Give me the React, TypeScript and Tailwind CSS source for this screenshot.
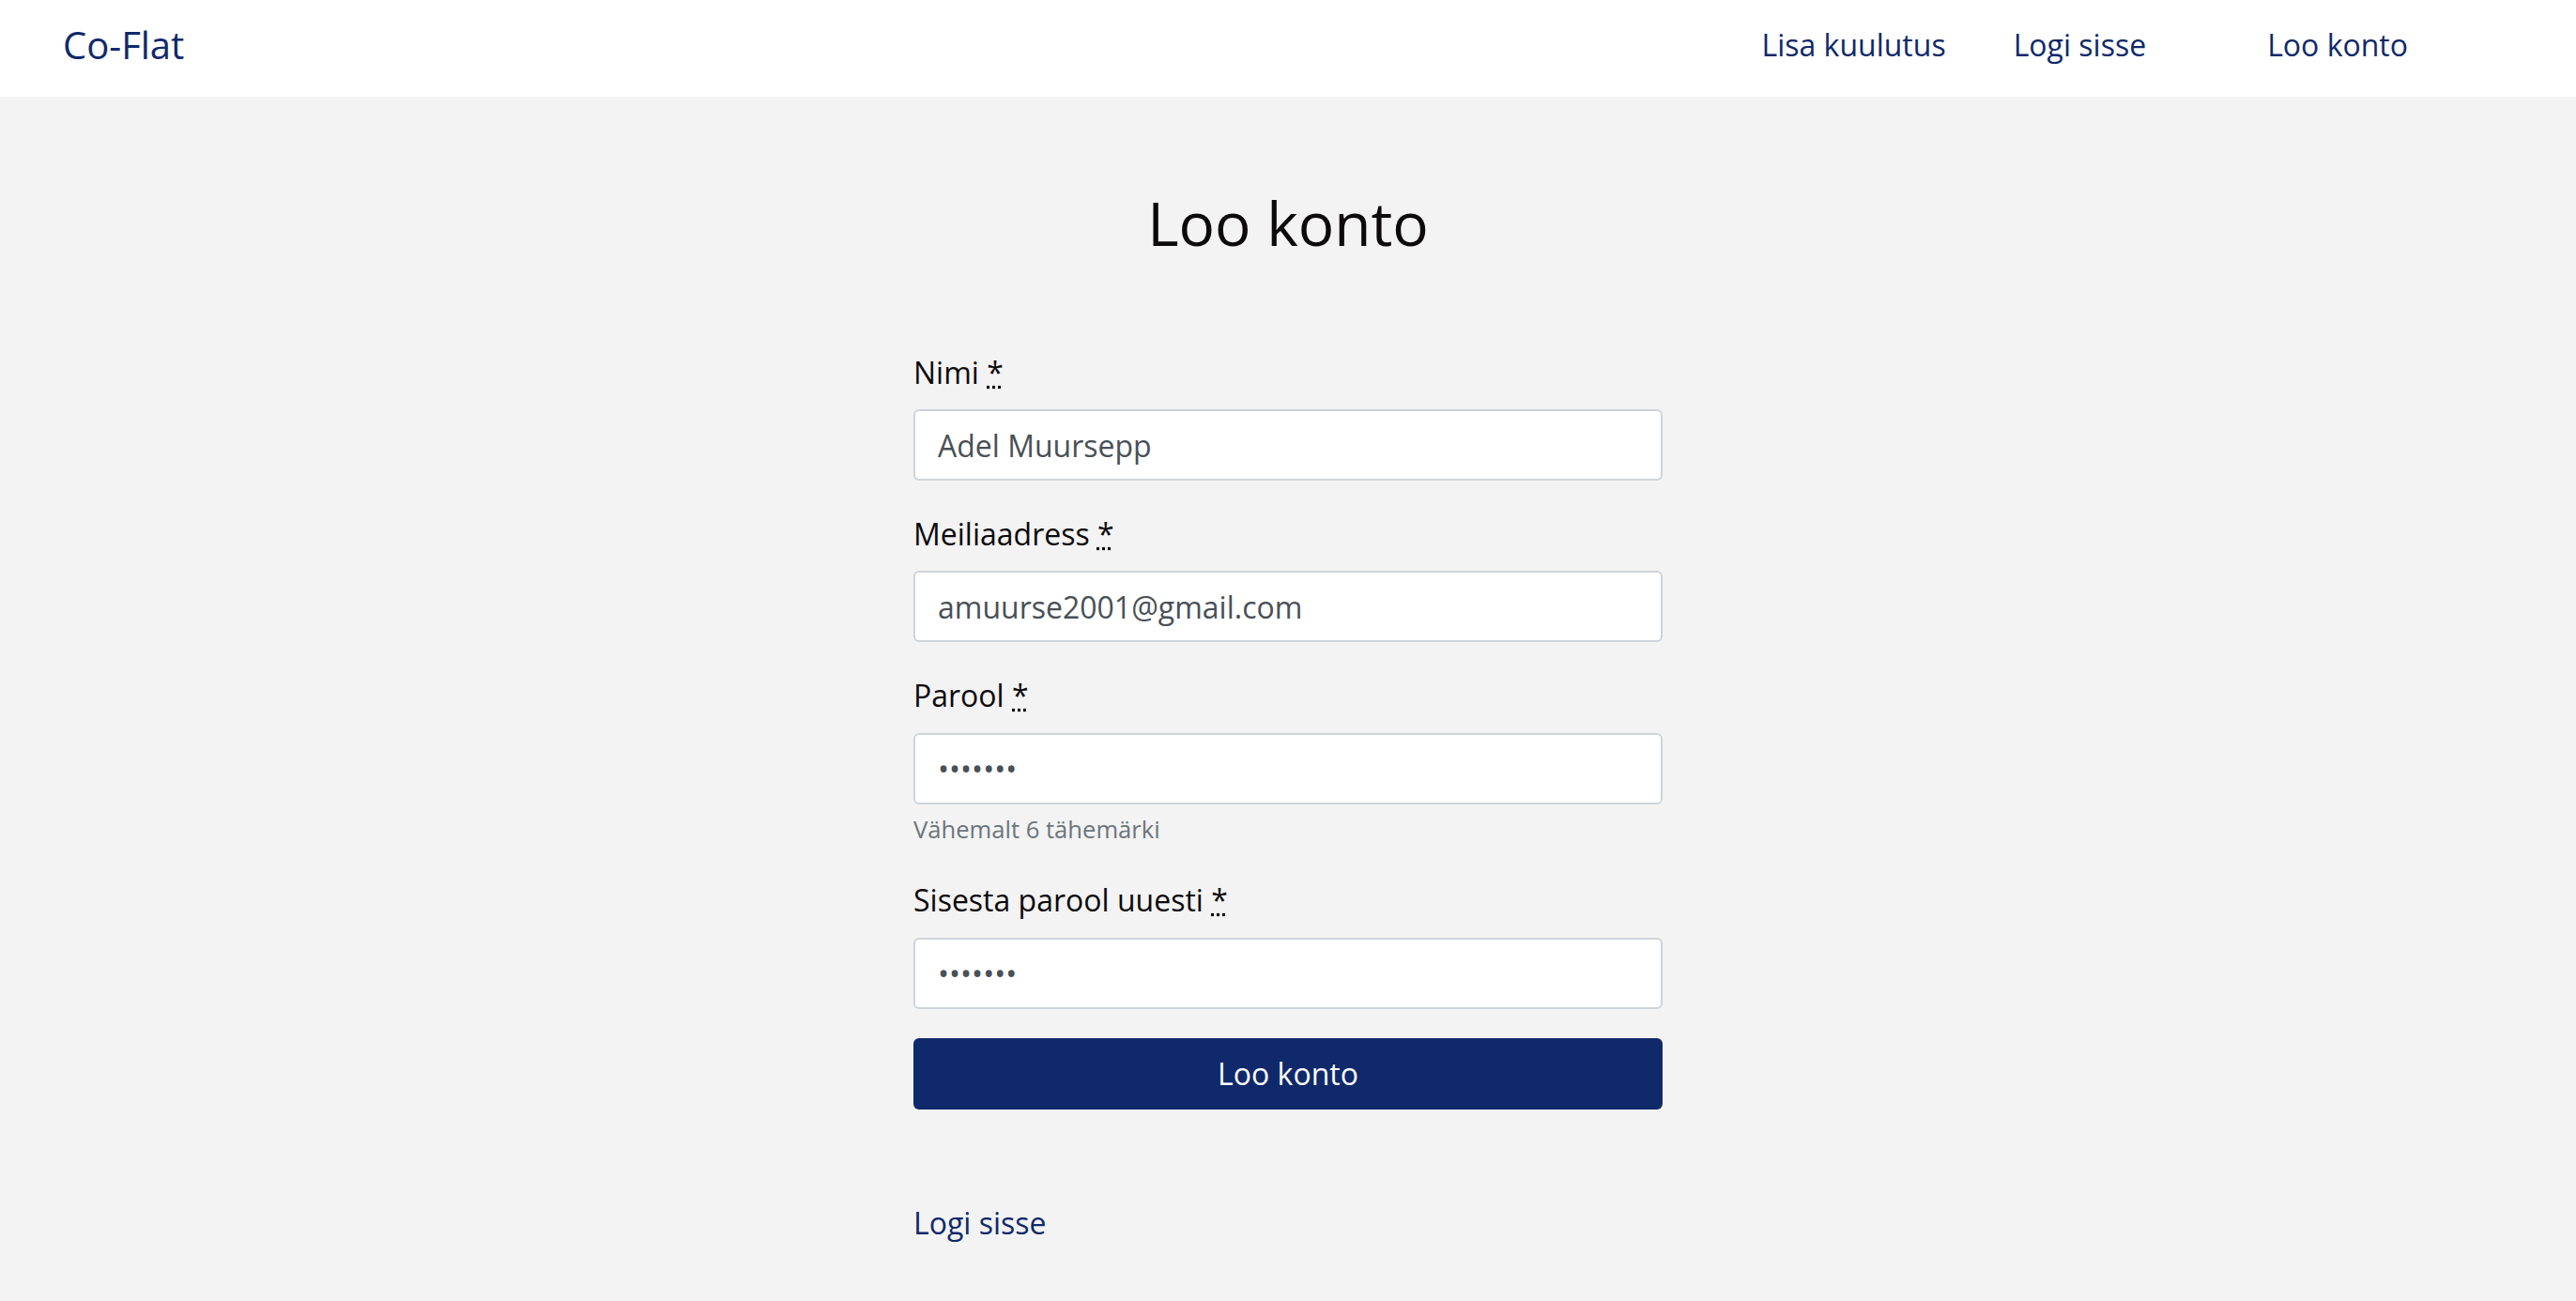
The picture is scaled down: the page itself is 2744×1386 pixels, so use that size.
const fields = [
  { label: "Nimi", type: "text", value: "Adel Muursepp" },
  { label: "Meiliaadress", type: "email", value: "amuurse2001@gmail.com" },
  { label: "Parool", type: "password", value: "1234567", help: "Vähemalt 6 tähemärki" },
  { label: "Sisesta parool uuesti", type: "password", value: "1234567" },
];

export default function App() {
  return (
    <div className="min-h-screen bg-[#f3f3f3] font-['Open_Sans',sans-serif] text-[32px] leading-[47.25px] text-[#0d0a0b]">
      {/* Navbar */}
      <header className="h-[103px] bg-white flex items-center justify-between pl-[67px] pr-[179px] pb-[8px]">
        <a href="#" className="text-[40px] leading-[56px] text-[#10296b]">Co-Flat</a>
        <nav className="flex items-center text-[#10296b]">
          <a href="#">Lisa kuulutus</a>
          <a href="#" className="ml-[72px]">Logi sisse</a>
          <a href="#" className="ml-[129px]">Loo konto</a>
        </nav>
      </header>

      <main className="pt-[97px] pb-[60px]">
        <h1 className="text-center text-[64px] leading-[1.2]">Loo konto</h1>

        <form className="w-[798px] mx-auto mt-[96px]" onSubmit={(e) => e.preventDefault()}>
          {fields.map((f, i) => (
            <div key={i} className="mb-[33px]">
              <label className="block mb-[16px]">
                {f.label}{" "}
                <abbr title="kohustuslik" className="underline decoration-dotted">*</abbr>
              </label>
              <input
                type={f.type}
                value={f.value}
                readOnly
                className="block w-full h-[76px] px-[24px] bg-white border-2 border-[#ced4da] rounded-[6px] text-[#495057] outline-none"
              />
              {f.help && (
                <small className="block mt-[8px] text-[25.6px] leading-[37.8px] text-[#6c757d]">{f.help}</small>
              )}
            </div>
          ))}

          <button type="submit" className="block w-full h-[76px] -mt-[2px] bg-[#10296b] text-white rounded-[6px]">
            Loo konto
          </button>
        </form>

        <div className="w-[798px] mx-auto mt-[97px]">
          <a href="#" className="text-[#10296b]">Logi sisse</a>
        </div>
      </main>
    </div>
  );
}
